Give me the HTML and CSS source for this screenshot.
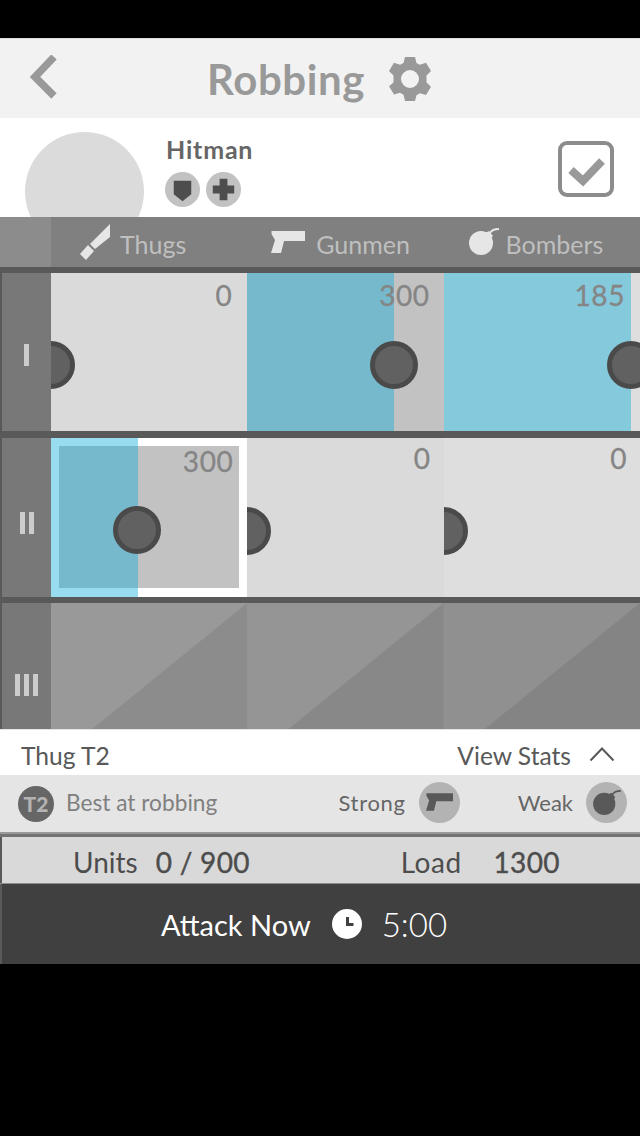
FILE: index.html
```html
<!DOCTYPE html>
<html lang="en">
<head>
<meta charset="utf-8">
<title>Robbing</title>
<link rel="stylesheet" href="styles.css">
</head>
<body>
<div class="phone">
  <div class="status"></div>
  <header class="header">
    <svg class="back" viewBox="0 0 30 44"><path d="M24 2 L5 22 L24 41" fill="none" stroke="#999" stroke-width="7.5"/></svg>
    <h1 class="title">Robbing</h1>
    <svg class="gear" viewBox="0 0 44 44"><path fill="#999" fill-rule="evenodd" d="M17 0h10l1.500 6 3.500 1.800 6-2 5 8.200-4.500 4.500v7l4.500 4.200-5 8.300-6-1.800-3.500 2L27 44H17l-1.500-6.300-3.500-1.900-6 1.800-5-8.300L5.500 25.500v-7L1 14l5-8.200 6 2 3.500-1.800zM22 13a9 9 0 1 0 0 18 9 9 0 0 0 0-18z"/></svg>
  </header>
  <section class="profile">
    <div class="avatar"></div>
    <div class="info">
      <div class="name">Hitman</div>
      <div class="badges">
        <span class="badge"><svg viewBox="0 0 36 36"><path fill="#4d4d4d" d="M9 9h18v14l-9 7-9-7z"/></svg></span>
        <span class="badge"><svg viewBox="0 0 36 36"><path fill="#4d4d4d" d="M14 7h8v7h7v8h-7v7h-8v-7H7v-8h7z"/></svg></span>
      </div>
    </div>
    <svg class="check" viewBox="0 0 56 56"><rect x="2" y="2" width="52" height="52" rx="7" fill="#fff" stroke="#8c8c8c" stroke-width="4"/><path d="M13 29 L25 40 L44 20" fill="none" stroke="#999" stroke-width="8"/></svg>
  </section>
  <nav class="tabs">
    <div class="corner"></div>
    <div class="tab tab-thugs">
      <svg class="tab-icon knife" viewBox="0 0 30 36"><path fill="#e6e6e6" d="M30 0v13L15 25l-5-5zM8 21l6 6-8 9-6-6z"/></svg>
      <span>Thugs</span>
    </div>
    <div class="tab tab-gunmen">
      <svg class="tab-icon gun" viewBox="0 0 34 22"><path fill="#e6e6e6" d="M0.500 0H34V10H13L10 22H0L4 9 0.500 3z"/></svg>
      <span>Gunmen</span>
    </div>
    <div class="tab tab-bombers">
      <svg class="tab-icon bomb" viewBox="0 0 30 27"><circle cx="12" cy="15" r="12" fill="#e6e6e6"/><path fill="#e6e6e6" d="M14 6l6-3 4 5-5 5z"/><path d="M21 5q2-4 9-4" fill="none" stroke="#e6e6e6" stroke-width="1.800"/></svg>
      <span>Bombers</span>
    </div>
  </nav>
  <main class="grid">
    <div class="row row-one">
      <div class="label"><i></i></div>
      <div class="cell plain">
        <span class="value">0</span>
        <span class="knob knob-start"></span>
      </div>
      <div class="cell track">
        <span class="fill" style="width:74.800%"></span>
        <span class="value">300</span>
        <span class="knob" style="left:74.800%"></span>
      </div>
      <div class="cell plain-light">
        <span class="fill fill-light" style="width:95.300%"></span>
        <span class="value">185</span>
        <span class="knob" style="left:95.300%"></span>
      </div>
    </div>
    <div class="row row-two">
      <div class="label"><i></i><i></i></div>
      <div class="cell selected">
        <span class="fill fill-pale" style="width:44.300%"></span>
        <div class="inner">
          <span class="fill" style="width:43.900%"></span>
          <span class="value">300</span>
        </div>
        <span class="knob knob-selected" style="left:43.800%"></span>
      </div>
      <div class="cell plain">
        <span class="value">0</span>
        <span class="knob knob-start"></span>
      </div>
      <div class="cell plain-light">
        <span class="value">0</span>
        <span class="knob knob-start"></span>
      </div>
    </div>
    <div class="row row-three">
      <div class="label"><i></i><i></i><i></i></div>
      <div class="cell locked locked-a"></div>
      <div class="cell locked locked-b"></div>
      <div class="cell locked locked-c"></div>
    </div>
  </main>
  <section class="unit-head">
    <span class="unit-name">Thug T2</span>
    <span class="view-stats">View Stats
      <svg class="chevron" viewBox="0 0 26 16"><path d="M1.500 14.500 L13 2.500 L24.500 14.500" fill="none" stroke="#595959" stroke-width="2"/></svg>
    </span>
  </section>
  <section class="unit-info">
    <span class="tier">T2</span>
    <span class="best">Best at robbing</span>
    <span class="strong">Strong</span>
    <span class="disc"><svg class="disc-gun" viewBox="0 0 34 22"><path fill="#595959" d="M0.500 0H34V10H13L10 22H0L4 9 0.500 3z"/></svg></span>
    <span class="weak">Weak</span>
    <span class="disc"><svg class="disc-bomb" viewBox="0 0 30 27"><circle cx="12" cy="15" r="12" fill="#595959"/><path fill="#595959" d="M14 6l6-3 4 5-5 5z"/><path d="M21 5q2-4 9-4" fill="none" stroke="#595959" stroke-width="1.800"/></svg></span>
  </section>
  <section class="totals">
    <span class="units">Units<b>0 / 900</b></span>
    <span class="load">Load<b>1300</b></span>
  </section>
  <section class="attack">
    <span class="attack-label">Attack Now</span>
    <svg class="clock" viewBox="0 0 30 30"><circle cx="15" cy="15" r="15" fill="#fff"/><path d="M15.500 8v7.500h6" fill="none" stroke="#404040" stroke-width="3"/></svg>
    <span class="time">5:00</span>
  </section>
</div>
</body>
</html>
```
FILE: styles.css
```css
* { box-sizing: border-box; margin: 0; padding: 0; }
html, body { height: 100%; background: #000; }
body { font-family: Lato, "Open Sans", "Liberation Sans", sans-serif; overflow: hidden; }
.phone { width: 640px; height: 1136px; display: flex; flex-direction: column; background: #000; }
.status { height: 38px; flex: none; }

.header { height: 80px; flex: none; background: #f2f2f2; border-top: 1px solid #ddd; display: flex; align-items: center; padding-left: 30px; }
.back { width: 30px; height: 44px; margin-top: -3px; }
.title { font-size: 42px; font-weight: 700; color: #999; margin-left: 147px; letter-spacing: 0.6px; line-height: 46px; margin-top: 1px; }
.gear { width: 44px; height: 44px; margin-left: 23px; margin-top: 1px; }

.profile { height: 99px; flex: none; background: #fff; display: flex; position: relative; overflow: hidden; padding-left: 25px; padding-top: 14px; }
.avatar { width: 119px; height: 119px; border-radius: 50%; background: #dbdbdb; flex: none; }
.info { margin-left: 22px; margin-top: 2px; }
.name { font-size: 25px; line-height: 30px; font-weight: 700; color: #666; letter-spacing: 0.8px; margin-bottom: 8px; }
.badges { display: flex; gap: 6px; margin-left: -1px; }
.badge { width: 35px; height: 35px; border-radius: 50%; background: #c2c2c2; display: block; }
.badge svg { width: 35px; height: 35px; display: block; }
.check { width: 56px; height: 56px; margin-left: auto; margin-right: 26px; margin-top: 9px; flex: none; }

.tabs { height: 50px; flex: none; background: #808080; display: flex; align-items: center; color: #bfbfbf; font-size: 25px; }
.corner { width: 51px; height: 100%; background: #8c8c8c; flex: none; }
.tab { display: flex; align-items: center; flex: none; width: 196.300px; }
.tab span { padding-top: 3px; }
.tab-thugs { padding-left: 29px; }
.tab-gunmen { padding-left: 24px; }
.tab-bombers { padding-left: 25px; }
.tab-icon { flex: none; display: block; }
.knife { width: 30px; height: 36px; margin-right: 10px; }
.gun { width: 34px; height: 22px; margin-right: 11px; }
.bomb { width: 30px; height: 27px; margin-right: 7px; margin-top: -1px; }

.grid { background: #595959; padding-top: 6px; flex: none; display: flex; flex-direction: column; padding-left: 2px; }
.row { display: grid; grid-template-columns: 49px repeat(3, 196.330px); overflow: hidden; width: 638px; }
.row-one { height: 158px; margin-bottom: 7px; }
.row-two { height: 159px; margin-bottom: 6px; }
.row-three { height: 126px; }
.label { background: #787878; display: flex; align-items: center; justify-content: center; gap: 4px; }
.label i { display: block; width: 5px; height: 22px; background: #ccc; }
.row-one .label { padding-top: 6px; }
.row-two .label { padding-top: 11px; }
.row-three .label { padding-top: 38px; }

.cell { position: relative; overflow: hidden; }
.plain { background: #dadada; }
.plain-light { background: #dedede; }
.track { background: #c2c2c2; }
.fill { position: absolute; left: 0; top: 0; bottom: 0; background: #77b9cc; display: block; }
.fill-light { background: #85c9dc; }
.fill-pale { background: #98dcef; }
.value { position: absolute; right: 15px; top: 3px; font-size: 28px; line-height: 38px; color: #858585; font-weight: 400; z-index: 1; letter-spacing: 0.6px; -webkit-text-stroke: 0.3px #858585; }
.track .value { right: 14px; }
.row-two .value { right: 13px; top: 1px; }
.knob { position: absolute; top: 68px; width: 48px; height: 48px; margin-left: -24px; border-radius: 50%; background: #616161; border: 5px solid #4a4a4a; z-index: 2; display: block; }
.knob-start { left: 0; }

.selected { background: #fff; }
.inner { position: absolute; left: 8px; top: 8px; right: 8px; bottom: 9px; background: #c2c2c2; }
.row-two .inner .value { right: 6px; top: -4px; }
.row-two .knob-start { top: 69px; }

.locked { position: relative; }
.locked::after { content: ""; position: absolute; inset: 0; clip-path: polygon(100% 0, 100% 100%, 21% 100%); }
.locked-a { background: #999; }
.locked-a::after { background: #8c8c8c; }
.locked-b { background: #959595; }
.locked-b::after { background: #888; }
.locked-c { background: #909090; }
.locked-c::after { background: #848484; }

.unit-head { height: 46px; flex: none; background: #fff; border-top: 1px solid #e5e5e5; display: flex; align-items: center; justify-content: space-between; padding: 0 25px 0 21px; color: #595959; font-size: 24.600px; }
.unit-name, .view-stats { padding-top: 5px; }
.view-stats { display: flex; align-items: center; gap: 18px; }
.chevron { width: 26px; height: 16px; display: block; margin-top: -3px; }

.unit-info { height: 57px; flex: none; background: #e5e5e5; display: flex; align-items: center; padding: 0 13px 0 18px; font-size: 22px; color: #6b6b6b; }
.tier { width: 36px; height: 36px; border-radius: 50%; background: #666; color: #b3b3b3; font-weight: 900; font-size: 21px; display: flex; align-items: center; justify-content: center; flex: none; }
.best { margin-left: 12px; color: #808080; margin-right: auto; font-size: 22.700px; margin-top: -2px; }
.strong { color: #666; margin-right: 13px; letter-spacing: 0.7px; margin-top: -2px; }
.weak { color: #666; margin-left: 58px; margin-right: 13px; margin-top: -2px; }
.disc { width: 41px; height: 41px; border-radius: 50%; background: #b3b3b3; display: flex; align-items: center; justify-content: center; flex: none; margin-top: -3px; }
.disc-gun { width: 27px; height: 18px; }
.disc-bomb { width: 28px; height: 25px; }

.totals { height: 52px; flex: none; background: #d9d9d9; border-top: 2px solid #999; position: relative; display: flex; align-items: center; color: #4d4d4d; font-size: 28px; box-shadow: inset 2px 0 0 #595959; border-bottom: 1px solid #8c8c8c; }
.totals::before { content: ""; position: absolute; left: 0; right: 0; top: 0; height: 3px; background: #737373; }
.totals b { margin-left: 18px; font-weight: 400; letter-spacing: 0.3px; -webkit-text-stroke: 0.4px #4d4d4d; }
.units { margin-left: 73px; padding-top: 6px; }
.load { margin-left: 151px; padding-top: 6px; letter-spacing: 0.5px; }
.load b { margin-left: 32px; }

.attack { height: 80px; flex: none; background: #404040; border-left: 2px solid #595959; display: flex; align-items: center; color: #fff; }
.attack-label { font-size: 29px; margin-left: 159px; }
.clock { width: 30px; height: 30px; margin-left: 21px; flex: none; }
.time { font-size: 33px; margin-left: 20px; font-weight: 300; }
```
